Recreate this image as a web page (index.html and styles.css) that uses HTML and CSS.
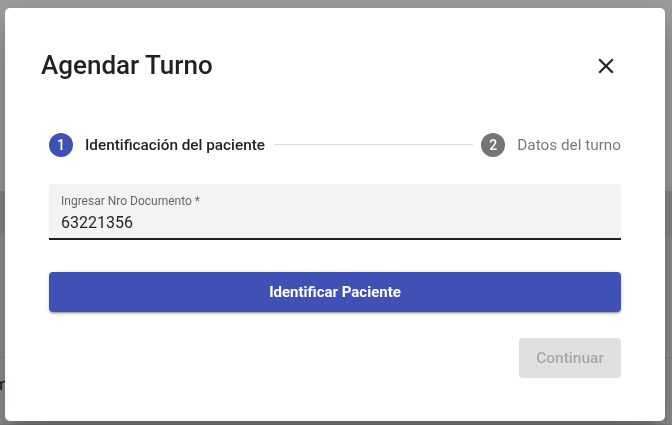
FILE: index.html
```html
<!DOCTYPE html>
<html lang="es">
<head>
<meta charset="utf-8">
<title>Agendar Turno</title>
<link rel="stylesheet" href="styles.css">
</head>
<body>
  <div class="page">
    <div class="page-top"></div>
    <div class="page-thead"></div>
    <div class="page-row"></div>
    <div class="page-row page-row-text">m</div>
  </div>

  <div class="backdrop">
    <div class="dialog" role="dialog" aria-labelledby="dlg-title">
      <div class="dialog-head">
        <h2 class="dialog-title" id="dlg-title">Agendar Turno</h2>
        <button class="icon-btn" aria-label="Cerrar">
          <svg viewBox="0 0 24 24" width="24" height="24"><path d="M19 6.41 17.59 5 12 10.59 6.41 5 5 6.41 10.59 12 5 17.59 6.41 19 12 13.41 17.59 19 19 17.59 13.41 12z"/></svg>
        </button>
      </div>

      <div class="dialog-body">
        <div class="stepper">
          <div class="step step-active">
            <span class="step-icon">1</span>
            <span class="step-label">Identificación del paciente</span>
          </div>
          <div class="step-connector"></div>
          <div class="step">
            <span class="step-icon step-icon-idle">2</span>
            <span class="step-label step-label-idle">Datos del turno</span>
          </div>
        </div>

        <div class="field">
          <label class="field-label">Ingresar Nro Documento *</label>
          <div class="field-value">63221356</div>
        </div>

        <button class="btn btn-primary">Identificar Paciente</button>

        <div class="actions">
          <button class="btn btn-disabled" disabled>Continuar</button>
        </div>
      </div>
    </div>
  </div>
</body>
</html>
```

FILE: styles.css
```css
* { box-sizing: border-box; }

html, body {
  margin: 0;
  height: 100%;
}

body {
  font-family: Roboto, "Liberation Sans", Arial, sans-serif;
  overflow: hidden;
  background: #ffffff;
}

/* page behind the modal */
.page {
  display: flex;
  flex-direction: column;
  height: 100%;
}
.page-top {
  height: 191px;
  background: #ffffff;
}
.page-thead {
  height: 44px;
  background: #dcdcdc;
}
.page-row {
  height: 123px;
  background: #e8e8e8;
  border-bottom: 1px solid #d2d2d2;
}
.page-row-text {
  flex: 1;
  padding-top: 17px;
  margin-left: -6px;
  font-size: 16px;
  color: #222;
}

/* modal */
.backdrop {
  position: fixed;
  inset: 0;
  background: rgba(0, 0, 0, 0.38);
  display: flex;
  align-items: flex-start;
  padding: 8px 0 0 5px;
}

.dialog {
  width: 660px;
  background: #fff;
  border-radius: 5px;
  box-shadow: 0 11px 15px -7px rgba(0,0,0,0.2), 0 24px 38px 3px rgba(0,0,0,0.14), 0 9px 46px 8px rgba(0,0,0,0.12);
  padding-bottom: 43px;
}

.dialog-head {
  display: flex;
  align-items: center;
  justify-content: space-between;
  padding: 42px 46px 0 36px;
}

.dialog-title {
  margin: 0;
  font-size: 26px;
  line-height: 30px;
  font-weight: 500;
  color: rgba(0, 0, 0, 0.87);
  letter-spacing: 0;
}

.icon-btn {
  border: 0;
  background: none;
  padding: 0;
  width: 26px;
  height: 26px;
  display: flex;
  align-items: center;
  justify-content: center;
  margin-top: 2px;
}
.icon-btn svg {
  width: 26px;
  height: 26px;
  fill: rgba(0, 0, 0, 0.87);
}

.dialog-body {
  padding: 0 44px;
}

/* stepper */
.stepper {
  display: flex;
  align-items: center;
  margin-top: 53px;
}
.step {
  display: flex;
  align-items: center;
  gap: 12px;
}
.step-icon {
  width: 24px;
  height: 24px;
  border-radius: 50%;
  background: #3f51b5;
  color: #fff;
  font-size: 14px;
  font-weight: 500;
  display: flex;
  align-items: center;
  justify-content: center;
}
.step-icon-idle { background: #757575; }
.step-label {
  font-size: 15.3px;
  font-weight: 500;
  color: rgba(0, 0, 0, 0.87);
}
.step-label-idle {
  font-weight: 400;
  color: rgba(0, 0, 0, 0.54);
}
.step-connector {
  flex: 1;
  height: 1px;
  background: #dadada;
  margin: 0 8px 1px 9px;
}

/* filled text field */
.field {
  margin-top: 27px;
  height: 56px;
  background: #f3f3f3;
  border-radius: 4px 4px 0 0;
  border-bottom: 2px solid #1e1e1e;
  padding: 10px 12px 0;
}
.field-label {
  display: block;
  font-size: 12px;
  line-height: 14px;
  color: rgba(0, 0, 0, 0.6);
}
.field-value {
  margin-top: 5px;
  font-size: 16px;
  line-height: 19px;
  color: rgba(0, 0, 0, 0.87);
}

/* buttons */
.btn {
  font-family: inherit;
  border: 0;
  border-radius: 4px;
  height: 40px;
  font-size: 15px;
  font-weight: 700;
  letter-spacing: 0;
}
.btn-primary {
  display: block;
  width: 100%;
  margin-top: 32px;
  background: #3f51b5;
  color: #fff;
  box-shadow: 0 3px 1px -2px rgba(0,0,0,0.2), 0 2px 2px 0 rgba(0,0,0,0.14), 0 1px 5px 0 rgba(0,0,0,0.12);
}
.actions {
  display: flex;
  justify-content: flex-end;
  margin-top: 26px;
}
.btn-disabled {
  width: 102px;
  background: #e0e0e0;
  color: rgba(0, 0, 0, 0.26);
  font-weight: 500;
  font-size: 15.5px;
}
```
